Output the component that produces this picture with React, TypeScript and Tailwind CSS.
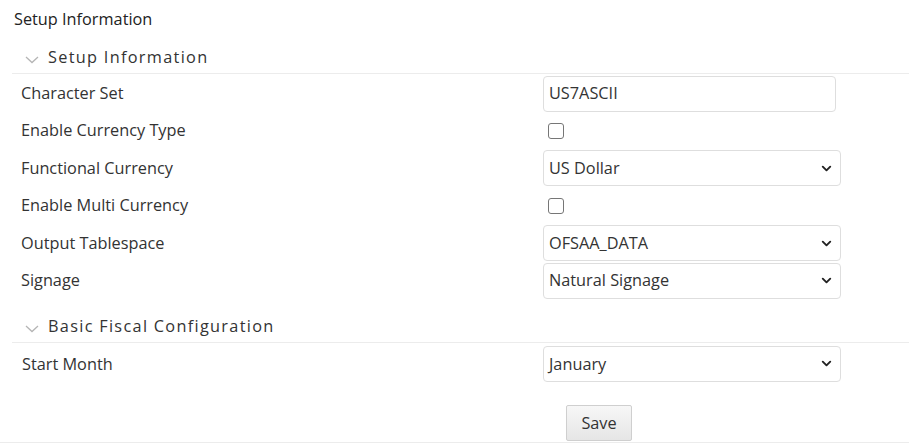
import React from "react";
import { ChevronDown } from "lucide-react";

const font = { fontFamily: '"Open Sans", "Noto Sans", sans-serif' };

function SectionHeader({ title, className = "" }: { title: string; className?: string }) {
  return (
    <div className={`ml-[12px] flex items-end border-b border-[#ececec] pb-[4px] ${className}`}>
      <svg width="14" height="8" viewBox="0 0 14 8" className="ml-[13px] mr-[9px] mb-[5px]">
        <path d="M1 1 L7 6.5 L13 1" fill="none" stroke="#b5b5b5" strokeWidth="1.3" />
      </svg>
      <span className="text-[16.3px] tracking-[1.3px] text-[#333]">{title}</span>
    </div>
  );
}

function Row({ label, children }: { label: string; children: React.ReactNode }) {
  return (
    <div className="flex h-[37.5px] items-center">
      <div className="w-[543px] pl-[21px] text-[16.3px] text-[#333]">{label}</div>
      <div className="flex flex-1 items-center">{children}</div>
    </div>
  );
}

function Select({ value }: { value: string }) {
  return (
    <div className="flex h-[36px] w-[298px] items-center justify-between rounded-[4px] border border-[#dedede] bg-white pl-[5px] pr-[6px] text-[16.3px] text-[#333]">
      <span>{value}</span>
      <ChevronDown size={15} strokeWidth={3} className="text-[#222]" />
    </div>
  );
}

function Checkbox() {
  return <div className="ml-[5px] h-[16px] w-[16px] rounded-[3px] border border-[#767676] bg-white" />;
}

export default function App() {
  return (
    <div className="h-[444px] w-[909px] overflow-hidden bg-white" style={font}>
      <div className="pl-[14px] pt-[7px] text-[16.3px] text-[#222]">Setup Information</div>
      <SectionHeader title="Setup Information" className="h-[43px]" />
      <Row label="Character Set">
        <div className="mt-[1px] flex h-[36px] w-[293px] items-center rounded-[4px] border border-[#dedede] pl-[5px] text-[16.3px] text-[#333]">
          US7ASCII
        </div>
      </Row>
      <Row label="Enable Currency Type">
        <Checkbox />
      </Row>
      <Row label="Functional Currency">
        <Select value="US Dollar" />
      </Row>
      <Row label="Enable Multi Currency">
        <Checkbox />
      </Row>
      <Row label="Output Tablespace">
        <Select value="OFSAA_DATA" />
      </Row>
      <Row label="Signage">
        <Select value="Natural Signage" />
      </Row>
      <SectionHeader title="Basic Fiscal Configuration" className="h-[44px]" />
      <div className="flex h-[39px] items-center pt-[2px]">
        <div className="w-[543px] pl-[22px] text-[16.3px] text-[#333]">Start Month</div>
        <Select value="January" />
      </div>
      <div className="flex border-b border-[#ececec] pt-[23px] pb-[1px] pl-[566px]">
        <button className="h-[36px] w-[66px] rounded-[2px] border border-[#cfcfcf] bg-gradient-to-b from-[#f7f7f7] to-[#e6e6e6] text-[16.3px] text-[#333]">
          Save
        </button>
      </div>
    </div>
  );
}
